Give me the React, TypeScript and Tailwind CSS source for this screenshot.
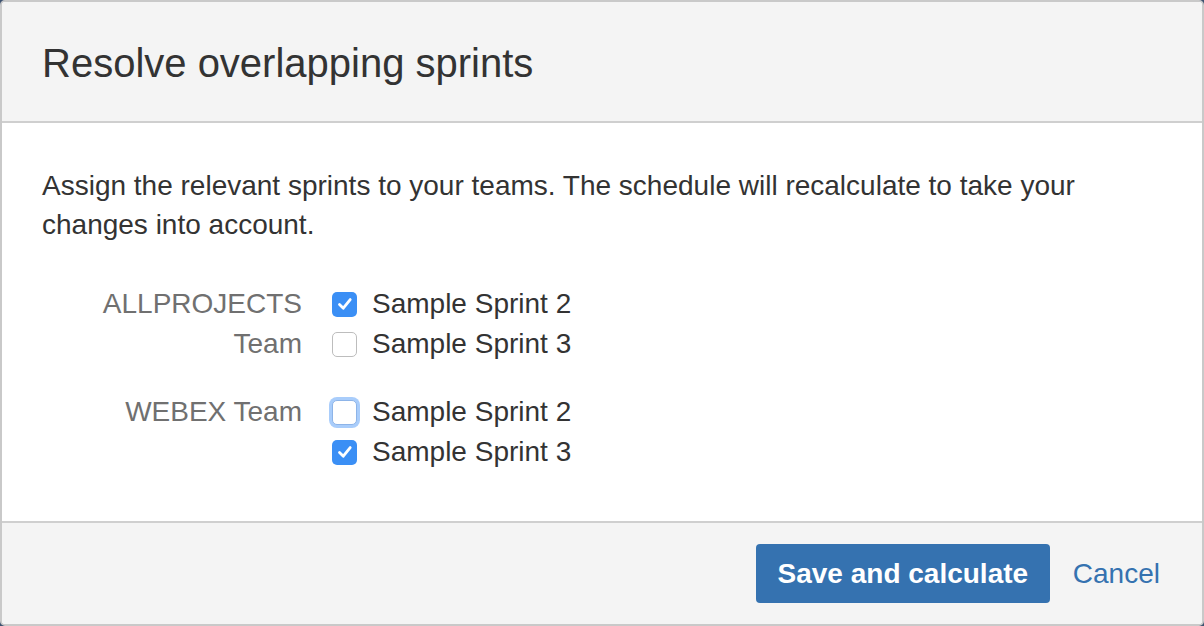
import React, { useState } from "react";

const groups = [
  { team: "ALLPROJECTS Team", sprints: [{ name: "Sample Sprint 2", on: true }, { name: "Sample Sprint 3", on: false }] },
  { team: "WEBEX Team", sprints: [{ name: "Sample Sprint 2", on: false, focus: true }, { name: "Sample Sprint 3", on: true }] },
];

function Box({ checked, focus }: { checked: boolean; focus?: boolean }) {
  if (checked) {
    return (
      <span className="flex h-[25px] w-[25px] items-center justify-center rounded-[5px] bg-[#3b8ff5]">
        <svg width="20" height="20" viewBox="0 0 20 20" fill="none">
          <path d="M4.5 10.5 L8.3 14.2 L15.2 5.6" stroke="white" strokeWidth="2.8" strokeLinecap="round" strokeLinejoin="round" />
        </svg>
      </span>
    );
  }
  return (
    <span
      className={
        focus
          ? "h-[25px] w-[25px] rounded-[5px] border border-[#8db4e8] bg-white shadow-[0_0_0_3px_#a9cdfb]"
          : "h-[25px] w-[25px] rounded-[5px] border border-[#bdbdbd] bg-white"
      }
    />
  );
}

export default function App() {
  const [state] = useState(groups);
  return (
    <div className="h-[626px] w-[1204px] bg-[#3d5270]" style={{ fontFamily: '"Liberation Sans", Arial, sans-serif' }}>
      <div className="flex h-full w-full flex-col overflow-hidden rounded-[5px] border-2 border-[#c9c9c9] bg-white">
        <div className="flex h-[121px] items-center border-b-2 border-[#cfcfcf] bg-[#f4f4f4] pl-[40px] pt-[2px]">
          <h1 className="text-[40px] text-[#333]">Resolve overlapping sprints</h1>
        </div>
        <div className="flex-1 px-[40px] pt-[43px]">
          <p className="max-w-[1080px] text-[28px] leading-[39px] text-[#333]">
            Assign the relevant sprints to your teams. The schedule will recalculate to take your changes into account.
          </p>
          <div className="mt-[40px] flex flex-col gap-[28px]">
            {state.map((g) => (
              <div key={g.team} className="flex">
                <div className="w-[260px] text-right text-[28px] leading-[40px] text-[#707070]">
                  <span className="inline-block w-[230px]">{g.team}</span>
                </div>
                <div className="ml-[30px] flex flex-col">
                  {g.sprints.map((s) => (
                    <label key={s.name} className="flex h-[40px] items-center gap-[15px]">
                      <Box checked={s.on} focus={(s as any).focus} />
                      <span className="text-[28px] text-[#333]">{s.name}</span>
                    </label>
                  ))}
                </div>
              </div>
            ))}
          </div>
        </div>
        <div className="flex h-[103px] items-center justify-end gap-[23px] border-t-2 border-[#cfcfcf] bg-[#f4f4f4] pr-[42px]">
          <button className="h-[59px] w-[294px] rounded-[4px] bg-[#3572b0] text-[28px] font-bold text-white">
            Save and calculate
          </button>
          <a className="text-[28px] text-[#3572b0]">Cancel</a>
        </div>
      </div>
    </div>
  );
}
